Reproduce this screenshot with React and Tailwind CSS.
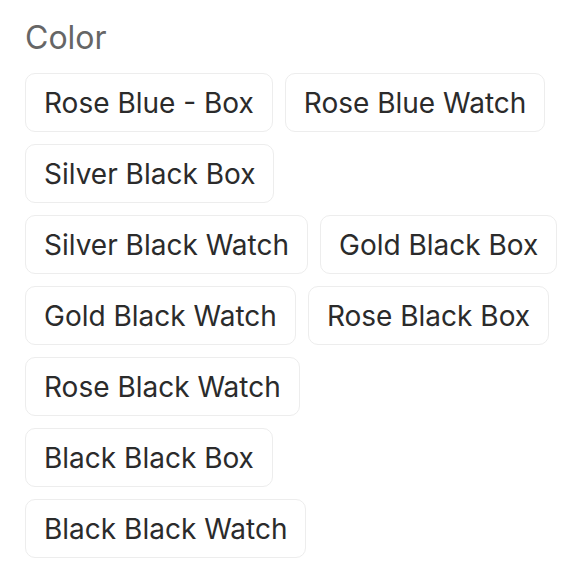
const colors = [
  "Rose Blue - Box",
  "Rose Blue Watch",
  "Silver Black Box",
  "Silver Black Watch",
  "Gold Black Box",
  "Gold Black Watch",
  "Rose Black Box",
  "Rose Black Watch",
  "Black Black Box",
  "Black Black Watch",
];

export default function App() {
  return (
    <div className="min-h-screen bg-white pl-[25px] pt-[17px] font-['Inter',sans-serif]">
      <h3 className="text-[32px] leading-[42px] text-[#666666]">Color</h3>
      <div className="mt-[14px] flex w-[534px] flex-wrap gap-[12px]">
        {colors.map((c) => (
          <button
            key={c}
            className="h-[59px] rounded-[10px] border border-[#ededed] bg-white px-[18px] text-[28px] text-[#2b2b2b]"
          >
            {c}
          </button>
        ))}
      </div>
    </div>
  );
}
